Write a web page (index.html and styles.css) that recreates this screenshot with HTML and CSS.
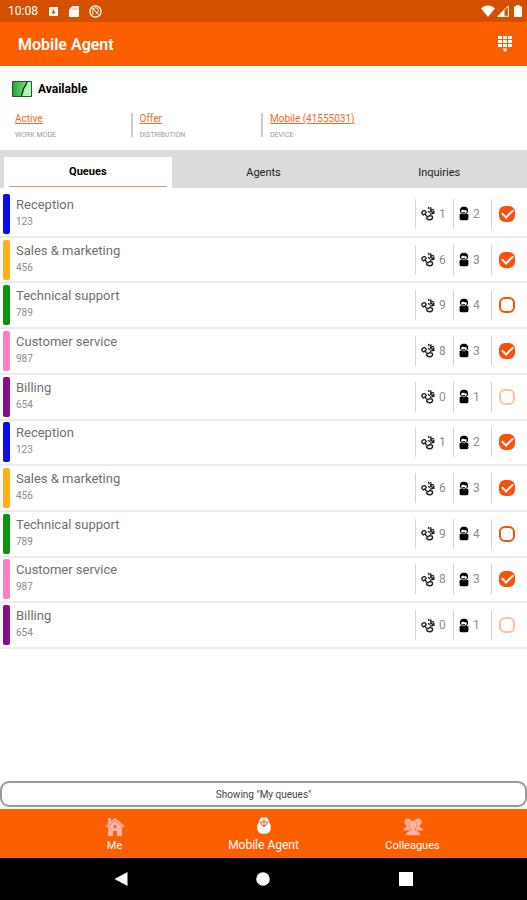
FILE: index.html
```html
<!DOCTYPE html>
<html lang="en">
<head>
  <meta charset="UTF-8">
  <meta name="viewport" content="width=device-width, initial-scale=1.0">
  <title>Mobile Agent</title>
  <link rel="stylesheet" href="styles.css">
</head>
<body>

  <!-- shared icons -->
  <svg class="sprite" aria-hidden="true">
    <symbol id="calls" viewBox="0 0 14 15">
      <g fill="none" stroke="#222" stroke-width="1.4">
        <path d="M.8 7.500C.6 5.800 2 4.400 3.800 4.600l1.400 1.600-1 1.600.9 2 2 .9 1.600-1.200 2.600.8c.8 1.800-.4 3.500-2.600 3.500-1.800 0-3-1-3.300-2.600M.8 7.500l1.600 1.300 1.800-1"/>
        <path d="M7.500.8l.6 2.400M9.800 1.200v3l3-.8M7 5.200l2 1.600M9.200 5l3.600 1.800V4.600M9 8.200l3.600-.8"/>
      </g>
    </symbol>
    <symbol id="agent" viewBox="0 0 10 15">
      <path fill="#000" d="M1 6C.5 2.500 2 .8 5 .8s4.500 1.700 4 5.200L7.900 6.600 7.500 4.200H5.200L3.800 3.600 2.300 4.400 2.100 6.600z"/>
      <path fill="none" stroke="#000" d="M1.800 5.800C2.200 7.500 3.500 8.200 5 8.200s2.800-.7 3.200-2.400M3.500 6.600H6"/>
      <path fill="#000" d="M.6 8.200 2.500 7.400 5 8.800l2.500-1.400 1.900.8v4.300c0 1.100-.6 1.700-1.700 1.700H2.300c-1.100 0-1.700-.6-1.700-1.700z"/>
    </symbol>
  </svg>

  <div class="system-bar">
    <span class="clock">10:08</span>
    <svg width="10" height="11" viewBox="0 0 10 11"><rect x="0" y="1" width="9" height="9" rx="1" fill="#fff"/><path d="M4.500 3 6.500 7.500h-4z" fill="#d35000"/></svg>
    <svg width="10" height="11" viewBox="0 0 10 11"><path d="M3.500 0H9a1 1 0 0 1 1 1v9a1 1 0 0 1-1 1H1a1 1 0 0 1-1-1V3.500z" fill="#fff"/><path d="M4 2v2M6 2v2M8 2v2" stroke="#f0a070"/></svg>
    <svg width="13" height="13" viewBox="0 0 13 13"><circle cx="6.500" cy="6.500" r="5.600" fill="none" stroke="#fff" stroke-width="1.300"/><path d="M3.800 9.500V5.500a2.800 2.800 0 0 1 5.600 0c0 1.800-1 2.700-2.600 2.700M3 2.800l7 7M5 4.800l3 3" fill="none" stroke="#fff"/></svg>
    <div class="system-status">
      <svg width="14" height="12" viewBox="0 0 14 12"><path d="M0 3.500C4-.5 10-.5 14 3.500L7 12z" fill="#fff"/></svg>
      <svg width="12" height="12" viewBox="0 0 12 12"><path d="M.8 11.300 11.300.8v10.500z" fill="none" stroke="#fff"/><path d="M1 11.500 7.500 5v6.500z" fill="#fff"/></svg>
      <svg width="8" height="12" viewBox="0 0 8 12"><path d="M2.500 0h3v1.300H7a1 1 0 0 1 1 1V11a1 1 0 0 1-1 1H1a1 1 0 0 1-1-1V2.300a1 1 0 0 1 1-1h1.500z" fill="#fff"/></svg>
    </div>
  </div>

  <header>
    <h1>Mobile Agent</h1>
    <button class="dialpad" aria-label="Dialpad">
      <svg width="14" height="16" viewBox="0 0 14 16" fill="#fff"><path d="M0 0h4v3H0zM5 0h4v3H5zM10 0h4v3h-4zM0 4h4v3H0zM5 4h4v3H5zM10 4h4v3h-4zM0 8h4v3H0zM5 8h4v3H5zM10 8h4v3h-4zM5 12.500h4L8 15.500H6z"/></svg>
    </button>
  </header>

  <section class="presence">
    <h2>
      <svg width="20" height="16" viewBox="0 0 20 16"><defs><linearGradient id="green" x2="1"><stop stop-color="#2fa33b"/><stop offset="1" stop-color="#7ddb83"/></linearGradient></defs><path d="M.5.500h19v15H.5z" fill="#b5f5b9"/><path d="M1 1h14L9.500 15H1z" fill="url(#green)"/><path d="M15 1 13 5.500 11.500 7.500 9.500 15" fill="none" stroke="#0b3d10" stroke-width="1.400"/><path d="M.5.500h19v15H.5z" fill="none" stroke="#17601d"/></svg>
      Available
    </h2>
    <div class="settings">
      <div><a href="#">Active</a><small>WORK MODE</small></div>
      <div><a href="#">Offer</a><small>DISTRIBUTION</small></div>
      <div><a href="#">Mobile (41555031)</a><small>DEVICE</small></div>
    </div>
  </section>

  <nav class="tabs">
    <button class="active">Queues</button>
    <button>Agents</button>
    <button>Inquiries</button>
  </nav>

  <ul class="queues">
    <li>
      <span class="color blue"></span>
      <div class="name"><label for="q1">Reception</label><p>123</p></div>
      <span class="count"><svg class="calls"><use href="#calls"/></svg>1</span>
      <span class="count"><svg class="agent"><use href="#agent"/></svg>2</span>
      <span class="check"><input type="checkbox" id="q1" checked></span>
    </li>
    <li>
      <span class="color yellow"></span>
      <div class="name"><label for="q2">Sales &amp; marketing</label><p>456</p></div>
      <span class="count"><svg class="calls"><use href="#calls"/></svg>6</span>
      <span class="count"><svg class="agent"><use href="#agent"/></svg>3</span>
      <span class="check"><input type="checkbox" id="q2" checked></span>
    </li>
    <li>
      <span class="color green"></span>
      <div class="name"><label for="q3">Technical support</label><p>789</p></div>
      <span class="count"><svg class="calls"><use href="#calls"/></svg>9</span>
      <span class="count"><svg class="agent"><use href="#agent"/></svg>4</span>
      <span class="check"><input type="checkbox" id="q3"></span>
    </li>
    <li>
      <span class="color pink"></span>
      <div class="name"><label for="q4">Customer service</label><p>987</p></div>
      <span class="count"><svg class="calls"><use href="#calls"/></svg>8</span>
      <span class="count"><svg class="agent"><use href="#agent"/></svg>3</span>
      <span class="check"><input type="checkbox" id="q4" checked></span>
    </li>
    <li>
      <span class="color purple"></span>
      <div class="name"><label for="q5">Billing</label><p>654</p></div>
      <span class="count"><svg class="calls"><use href="#calls"/></svg>0</span>
      <span class="count"><svg class="agent"><use href="#agent"/></svg>1</span>
      <span class="check"><input type="checkbox" id="q5" disabled></span>
    </li>
    <li>
      <span class="color blue"></span>
      <div class="name"><label for="q6">Reception</label><p>123</p></div>
      <span class="count"><svg class="calls"><use href="#calls"/></svg>1</span>
      <span class="count"><svg class="agent"><use href="#agent"/></svg>2</span>
      <span class="check"><input type="checkbox" id="q6" checked></span>
    </li>
    <li>
      <span class="color yellow"></span>
      <div class="name"><label for="q7">Sales &amp; marketing</label><p>456</p></div>
      <span class="count"><svg class="calls"><use href="#calls"/></svg>6</span>
      <span class="count"><svg class="agent"><use href="#agent"/></svg>3</span>
      <span class="check"><input type="checkbox" id="q7" checked></span>
    </li>
    <li>
      <span class="color green"></span>
      <div class="name"><label for="q8">Technical support</label><p>789</p></div>
      <span class="count"><svg class="calls"><use href="#calls"/></svg>9</span>
      <span class="count"><svg class="agent"><use href="#agent"/></svg>4</span>
      <span class="check"><input type="checkbox" id="q8"></span>
    </li>
    <li>
      <span class="color pink"></span>
      <div class="name"><label for="q9">Customer service</label><p>987</p></div>
      <span class="count"><svg class="calls"><use href="#calls"/></svg>8</span>
      <span class="count"><svg class="agent"><use href="#agent"/></svg>3</span>
      <span class="check"><input type="checkbox" id="q9" checked></span>
    </li>
    <li>
      <span class="color purple"></span>
      <div class="name"><label for="q10">Billing</label><p>654</p></div>
      <span class="count"><svg class="calls"><use href="#calls"/></svg>0</span>
      <span class="count"><svg class="agent"><use href="#agent"/></svg>1</span>
      <span class="check"><input type="checkbox" id="q10" disabled></span>
    </li>
  </ul>

  <button class="filter">Showing "My queues"</button>

  <nav class="bottom-nav">
    <a href="#">
      <svg width="20" height="19" viewBox="0 0 20 19"><path d="M3 1h3v3.200L10 .5l9.500 8.800-1.200 1.200L17 9.500V19h-5v-5H8v5H3V9.500l-1.300 1L.5 9.300 3 7z" fill="#ffb1a6"/><path d="M3.500 9 10 3.200 16.500 9" fill="none" stroke="#fb5f00" stroke-width=".6"/><circle cx="10" cy="9.500" r="1.500" fill="#fb5f00"/></svg>
      Me
    </a>
    <a href="#" class="active">
      <svg width="14" height="17" viewBox="0 0 14 17"><path d="M2 5.500C2 2 4 .3 7 .3s5 1.700 5 5.200c1.500 1 2 3 1.700 6-.4 3.700-2 5.200-6.700 5.200S.7 15.200.3 11.500c-.3-3 .2-5 1.700-6z" fill="#fff"/><path d="M3 5.300C4.500 5.400 6 4.500 7 3.500c1 1 2.500 1.900 4 1.800M4 6c.3 2 1.500 3 3 3s2.700-1 3-3M7 4v6" fill="none" stroke="#e04a00"/></svg>
      Mobile Agent
    </a>
    <a href="#">
      <svg width="20" height="18" viewBox="0 0 20 18" fill="#ffb1a6"><circle cx="5" cy="4" r="3.600"/><circle cx="15" cy="4" r="3.600"/><path d="M0 12.500c0-2 1.500-3 3.500-3.500V6h4v6.500zM20 12.500c0-2-1.500-3-3.500-3.500V6h-4v6.500z"/><path d="M10 2.500c2.600 0 4 1.700 4 4.200 0 1.800-.7 3.300-1.800 4.200v1.300c2.600.7 5 2 5.300 5.300h-15c.3-3.300 2.700-4.600 5.300-5.300v-1.300C6.700 10 6 8.500 6 6.700c0-2.500 1.400-4.200 4-4.200z" stroke="#fb5f00" stroke-width=".5"/></svg>
      Colleagues
    </a>
  </nav>

  <div class="system-nav">
    <button aria-label="Back"><svg width="14" height="16" viewBox="0 0 14 16"><path d="M13.500 1v14L.5 8z" fill="#fff"/></svg></button>
    <button aria-label="Home"><svg width="14" height="14" viewBox="0 0 14 14"><circle cx="7" cy="7" r="6.800" fill="#fff"/></svg></button>
    <button aria-label="Recent apps"><svg width="14" height="14" viewBox="0 0 14 14"><path d="M0 0h14v14H0z" fill="#fff"/></svg></button>
  </div>

</body>
</html>
```
FILE: styles.css
```css
* { margin: 0; padding: 0; box-sizing: border-box; font-family: Roboto, sans-serif; }
body { background: #fff; color: #000; min-height: 100vh; display: flex; flex-direction: column; }
svg { display: block; flex: none; }
button { border: none; background: none; cursor: pointer; }
.sprite { display: none; }

.system-bar {
  background: #d35000; color: #fff; height: 22px; padding: 0 5px 0 8px;
  display: flex; align-items: center; gap: 10px;
}
.clock { font-size: 12px; margin-right: 1px; }
.system-status { display: flex; align-items: center; gap: 2px; margin-left: auto; }
.system-status svg:last-child { margin-left: 3px; }

header {
  background: #fb5f00; color: #fff; height: 44px; padding: 0 15px 0 18px;
  display: flex; align-items: center; justify-content: space-between;
}
header h1 { font-size: 16px; font-weight: 600; }

.presence { padding: 15px 5px 13px 0; }
.presence h2 {
  font-size: 12px; line-height: 16px; font-weight: 700; padding-left: 12px;
  display: flex; align-items: center; gap: 6px;
}
.settings { display: grid; grid-template-columns: 1fr 1fr 2fr; margin-top: 16px; }
.settings div { padding-left: 7px; height: 24px; border-left: 2px solid #ccc; }
.settings div:first-child { padding-left: 15px; border-left: none; }
.settings a { display: block; font-size: 10px; line-height: 12px; color: #f26a2a; }
.settings small { display: block; font-size: 7px; line-height: 8px; margin-top: 6px; color: #999; }

.tabs { background: #dbdbdb; height: 38px; display: grid; grid-template-columns: 1fr 1fr 1fr; padding-top: 7px; }
.tabs button { margin: 0 4px; font-size: 11px; line-height: 29px; color: #222; }
.tabs .active {
  background: #fff; font-weight: 700; color: #000; padding: 0 5px;
  display: flex; flex-direction: column; align-items: stretch;
}
.tabs .active::after { content: ""; height: 1px; background: #f0907a; }

.queues {
  list-style: none; flex: 1; margin: 4px 0 132px;
  display: grid; grid-auto-rows: 1fr;
}
.queues li {
  display: flex; align-items: center; min-height: 44px;
  padding: 0 10px 0 3px; border-bottom: 2px solid #ececec;
}
.color { width: 7px; height: 40px; border-radius: 2px; }
.blue { background: #0b0bee; }
.yellow { background: #ffb01c; }
.green { background: #0c930c; }
.pink { background: #ff80c0; }
.purple { background: #86108a; }
.name { flex: 1; padding: 0 0 2px 6px; color: #707070; }
.name label { display: block; font-size: 13px; line-height: 18px; }
.name p { font-size: 10px; line-height: 16px; color: #8c8c8c; }
.count, .check { display: flex; align-items: center; height: 30px; border-left: 1px solid #d4d4d4; }
.count { width: 38px; padding-left: 5px; gap: 4px; font-size: 12px; color: #8c8c8c; }
.calls { width: 14px; height: 15px; }
.agent { width: 10px; height: 15px; }
.check { width: 26px; justify-content: flex-end; padding-right: 2px; }
.check input {
  appearance: none; width: 16px; height: 16px; border: 2px solid #f9500c; border-radius: 6px;
  display: flex; align-items: center; justify-content: center; cursor: pointer;
}
.check input:checked { background: #f9500c; }
.check input:checked::after {
  content: ""; width: 5px; height: 9px; margin-bottom: 3px;
  border: solid #fff; border-width: 0 2px 2px 0; transform: rotate(45deg);
}
.check input:disabled { border-color: #ffc29c; }

.filter {
  height: 26px; border: 2px solid #999; border-radius: 9px; margin-bottom: 2px;
  font-size: 10px; color: #444;
}
.bottom-nav {
  background: #fb5f00; height: 49px; padding: 0 40px 5px;
  display: flex;
}
.bottom-nav a {
  flex: 1 0 0; display: flex; flex-direction: column; align-items: center; justify-content: flex-end;
  gap: 2px; color: #fff; text-decoration: none; font-size: 11px; line-height: 15px;
}
.bottom-nav .active { font-size: 12px; gap: 4px; }
.system-nav { background: #000; height: 42px; padding: 0 50px; display: flex; }
.system-nav button { flex: 1; display: flex; align-items: center; justify-content: center; }
```
